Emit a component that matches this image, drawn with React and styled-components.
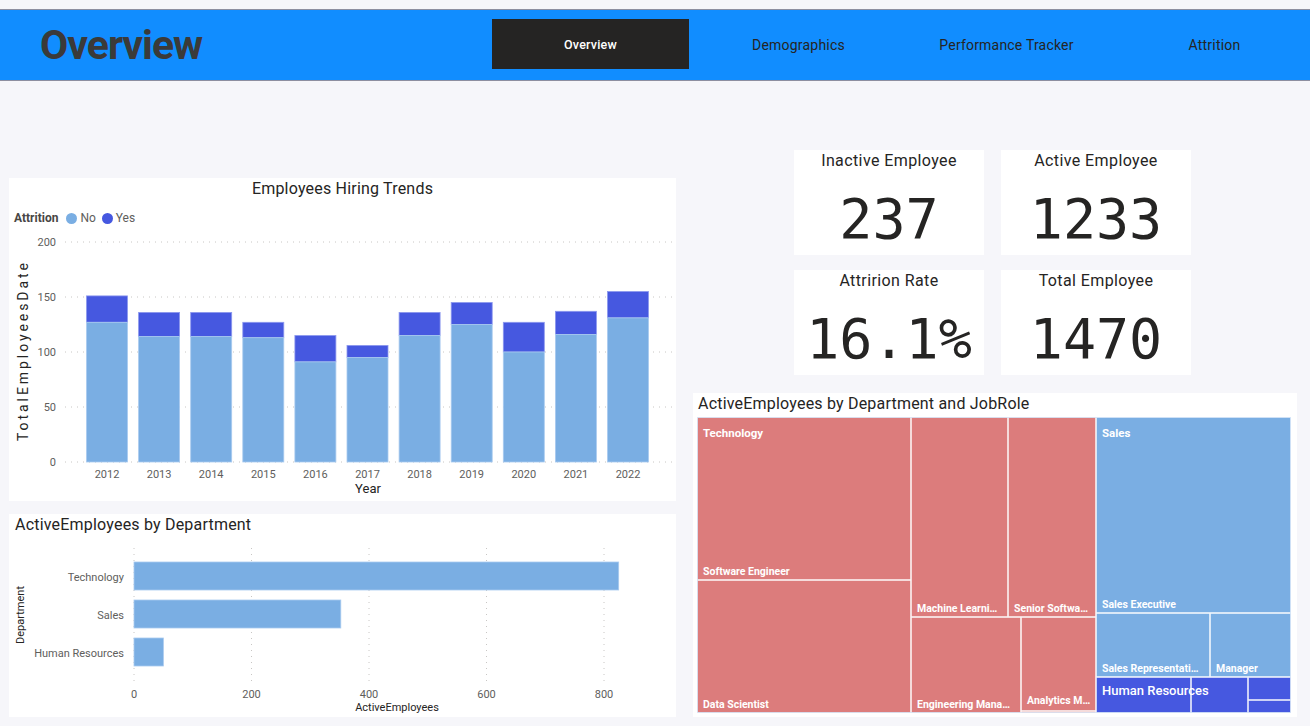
import React from "react";
import styled, { createGlobalStyle } from "styled-components";

const GlobalStyle = createGlobalStyle`
  html, body { margin: 0; padding: 0; background: #F6F6FA; }
  body { font-family: Roboto, "Noto Sans", sans-serif; color: #252423; }
`;

const Page = styled.div`
  width: 1310px;
  height: 726px;
  overflow: hidden;
  padding-top: 9px;
  box-sizing: border-box;
`;

const Header = styled.header`
  height: 72px;
  box-sizing: border-box;
  background: #118dff;
  border-top: 1px solid #8d8fa0;
  border-bottom: 1px solid #8d8fa0;
  display: flex;
  align-items: center;
`;

const Title = styled.h1`
  margin: 0;
  width: 492px;
  flex: none;
  padding-left: 40px;
  box-sizing: border-box;
  font-size: 41px;
  font-weight: 700;
  color: #3b3a39;
  letter-spacing: -1px;
`;

const Tabs = styled.nav`
  display: flex;
  gap: 11px;
  flex: none;
  margin-top: -2px;
`;

const Tab = styled.div`
  width: 197px;
  height: 50px;
  flex: none;
  display: flex;
  align-items: center;
  justify-content: center;
  background: ${(p) => (p.$active ? "#252423" : "transparent")};
  color: ${(p) => (p.$active ? "#ffffff" : "#252423")};
  font-size: ${(p) => (p.$active ? "12.5px" : "14px")};
  font-weight: ${(p) => (p.$active ? 500 : 400)};
  letter-spacing: 0.2px;
  padding-top: 1px;
  box-sizing: border-box;
`;

const Main = styled.main`
  display: flex;
  padding-left: 9px;
`;

const LeftCol = styled.div`
  width: 667px;
  flex: none;
  display: flex;
  flex-direction: column;
  gap: 13px;
  padding-top: 97px;
`;

const RightCol = styled.div`
  width: 604px;
  flex: none;
  margin-left: 17px;
  display: flex;
  flex-direction: column;
  padding-top: 69px;
`;

const Card = styled.section`
  background: #ffffff;
  height: ${(p) => p.$h}px;
  display: flex;
  flex-direction: column;
  overflow: hidden;
`;

const CardTitle = styled.h2`
  margin: 0;
  font-size: 16px;
  font-weight: 400;
  line-height: 22px;
  height: 20px;
  color: #252423;
  text-align: ${(p) => (p.$center ? "center" : "left")};
  padding-left: ${(p) => p.$pl || 0}px;
  letter-spacing: 0.2px;
  overflow: visible;
`;

const Legend = styled.div`
  display: flex;
  align-items: center;
  margin-top: 12px;
  padding-left: 5px;
  height: 16px;
  font-size: 12px;
  color: #605e5c;
`;

const LegendTitle = styled.span`
  font-weight: 700;
  color: #484644;
  margin-right: 8px;
`;

const LegendItem = styled.span`
  display: flex;
  align-items: center;
  gap: 3px;
  margin-right: 6px;
`;

const Dot = styled.span`
  width: 11px;
  height: 11px;
  border-radius: 50%;
  background: ${(p) => p.$c};
`;

const ChartSvg = styled.svg`
  display: block;
  flex: none;
  margin-top: ${(p) => p.$mt || 0}px;
  margin-left: ${(p) => p.$ml || 0}px;
`;

const AxisText = styled.text`
  font-family: Roboto, "Noto Sans", sans-serif;
  font-size: 11px;
  fill: #605e5c;
`;

const AxisTitle = styled.text`
  font-family: Roboto, "Noto Sans", sans-serif;
  font-size: ${(p) => p.$fs || 13}px;
  fill: #252423;
`;

const KpiGrid = styled.div`
  display: grid;
  grid-template-columns: 190px 190px;
  grid-auto-rows: 105px;
  column-gap: 17px;
  row-gap: 15px;
  padding-left: 101px;
`;

const Kpi = styled.div`
  background: #ffffff;
  display: flex;
  flex-direction: column;
  align-items: center;
`;

const KpiLabel = styled.div`
  font-size: 16px;
  line-height: 22px;
  height: 20px;
  color: #252423;
  letter-spacing: 0.4px;
`;

const KpiValue = styled.div`
  font-family: "DejaVu Sans Mono", "Liberation Mono", monospace;
  font-size: 55px;
  line-height: 55px;
  margin-top: 22px;
  color: #252423;
`;

const TreeCard = styled(Card)`
  margin-top: 18px;
`;

const TreeLabel = styled.text`
  font-family: Roboto, "Noto Sans", sans-serif;
  font-size: ${(p) => p.$fs || 10.5}px;
  font-weight: ${(p) => p.$w || 700};
  fill: #ffffff;
`;

const LIGHT = "#7aaee3";
const DARK = "#4658e0";
const RED = "#dc7c7c";

const years = [
  [2012, 127, 151],
  [2013, 114, 136],
  [2014, 114, 136],
  [2015, 113, 127],
  [2016, 91, 115],
  [2017, 95, 106],
  [2018, 115, 136],
  [2019, 125, 145],
  [2020, 100, 127],
  [2021, 116, 137],
  [2022, 131, 155],
];

function HiringChart() {
  const y0 = 232;
  const k = 1.1;
  return (
    <ChartSvg width="667" height="271" $mt={4}>
      {[0, 50, 100, 150, 200].map((v) => (
        <g key={v}>
          <line x1="56" x2="666" y1={y0 - v * k} y2={y0 - v * k} stroke="#c8c6c4" strokeWidth="1" strokeDasharray="1 5" />
          <AxisText x="47" y={y0 - v * k + 4} textAnchor="end">{v}</AxisText>
        </g>
      ))}
      {years.map(([yr, no, tot], i) => {
        const cx = 98 + 52.1 * i;
        const x = cx - 20.5;
        return (
          <g key={yr}>
            <rect x={x} y={y0 - tot * k} width="41" height={(tot - no) * k} fill={DARK} stroke="#8c98ee" strokeWidth="0.8" />
            <rect x={x} y={y0 - no * k} width="41" height={no * k} fill={LIGHT} stroke="#a9caef" strokeWidth="0.8" />
            <AxisText x={cx} y="248" textAnchor="middle">{yr}</AxisText>
          </g>
        );
      })}
      <AxisTitle x="359" y="263" textAnchor="middle">Year</AxisTitle>
      <AxisTitle x="14" y="127" textAnchor="middle" transform="rotate(-90 14 122)" $fs={14} textLength="178">
        TotalEmployeesDate
      </AxisTitle>
    </ChartSvg>
  );
}

const depts = [
  ["Technology", 825, 28, 47],
  ["Sales", 352, 66, 85],
  ["Human Resources", 50, 104, 123],
];

function DeptChart() {
  const x0 = 125;
  const k = 0.5875;
  return (
    <ChartSvg width="667" height="183">
      {[0, 200, 400, 600, 800].map((v) => (
        <g key={v}>
          <line x1={x0 + v * k} x2={x0 + v * k} y1="14" y2="148" stroke="#c8c6c4" strokeWidth="1" strokeDasharray="1 5" />
          <AxisText x={x0 + v * k} y="164" textAnchor="middle">{v}</AxisText>
        </g>
      ))}
      {depts.map(([name, v, y, ly]) => (
        <g key={name}>
          <rect x={x0} y={y} width={v * k} height="28" fill={LIGHT} stroke="#a9caef" strokeWidth="0.8" />
          <AxisText x="115" y={ly} textAnchor="end">{name}</AxisText>
        </g>
      ))}
      <AxisTitle x="388" y="177" textAnchor="middle" $fs={11}>ActiveEmployees</AxisTitle>
      <AxisTitle x="11" y="85" textAnchor="middle" transform="rotate(-90 11 81)" $fs={11}>Department</AxisTitle>
    </ChartSvg>
  );
}

const cells = [
  { x: 0, y: 0, w: 214, h: 163, c: RED, label: "Software Engineer" },
  { x: 0, y: 163, w: 214, h: 133, c: RED, label: "Data Scientist" },
  { x: 214, y: 0, w: 97, h: 200, c: RED, label: "Machine Learni…" },
  { x: 311, y: 0, w: 88, h: 200, c: RED, label: "Senior Softwa…" },
  { x: 214, y: 200, w: 110, h: 96, c: RED, label: "Engineering Mana…" },
  { x: 324, y: 200, w: 75, h: 94, c: RED, label: "Analytics M…" },
  { x: 324, y: 294, w: 75, h: 2, c: RED },
  { x: 399, y: 0, w: 195, h: 196, c: LIGHT, label: "Sales Executive" },
  { x: 399, y: 196, w: 114, h: 64, c: LIGHT, label: "Sales Representati…" },
  { x: 513, y: 196, w: 81, h: 64, c: LIGHT, label: "Manager" },
  { x: 399, y: 260, w: 95, h: 36, c: DARK },
  { x: 494, y: 260, w: 57, h: 36, c: DARK },
  { x: 551, y: 260, w: 43, h: 23, c: DARK },
  { x: 551, y: 283, w: 43, h: 13, c: DARK },
];

function Treemap() {
  return (
    <ChartSvg width="594" height="296" $mt={4} $ml={4}>
      {cells.map((c, i) => (
        <rect
          key={i}
          x={c.x + 0.5}
          y={c.y + 0.5}
          width={c.w - 1}
          height={c.h - 1}
          fill={c.c}
          stroke="rgba(255,255,255,0.45)"
          strokeWidth="1"
        />
      ))}
      {cells
        .filter((c) => c.label)
        .map((c) => (
          <TreeLabel key={c.label} x={c.x + 6} y={c.y + c.h - (c.label === "Analytics M…" ? 7 : 5)}>
            {c.label}
          </TreeLabel>
        ))}
      <TreeLabel x="6" y="20" $fs={11.5}>Technology</TreeLabel>
      <TreeLabel x="405" y="20" $fs={11.5}>Sales</TreeLabel>
      <TreeLabel x="405" y="278" $fs={13} $w={500}>Human Resources</TreeLabel>
      <rect x="0.5" y="0.5" width="593" height="295" fill="none" stroke="rgba(200,220,245,0.6)" strokeWidth="1" />
    </ChartSvg>
  );
}

const kpis = [
  ["Inactive Employee", "237"],
  ["Active Employee", "1233"],
  ["Attririon Rate", "16.1%"],
  ["Total Employee", "1470"],
];

export default function App() {
  return (
    <Page>
      <GlobalStyle />
      <Header>
        <Title>Overview</Title>
        <Tabs>
          <Tab $active>Overview</Tab>
          <Tab>Demographics</Tab>
          <Tab>Performance Tracker</Tab>
          <Tab>Attrition</Tab>
        </Tabs>
      </Header>
      <Main>
        <LeftCol>
          <Card $h={323}>
            <CardTitle $center>Employees Hiring Trends</CardTitle>
            <Legend>
              <LegendTitle>Attrition</LegendTitle>
              <LegendItem><Dot $c={LIGHT} />No</LegendItem>
              <LegendItem><Dot $c={DARK} />Yes</LegendItem>
            </Legend>
            <HiringChart />
          </Card>
          <Card $h={203}>
            <CardTitle $pl={6}>ActiveEmployees by Department</CardTitle>
            <DeptChart />
          </Card>
        </LeftCol>
        <RightCol>
          <KpiGrid>
            {kpis.map(([l, v]) => (
              <Kpi key={l}>
                <KpiLabel>{l}</KpiLabel>
                <KpiValue>{v}</KpiValue>
              </Kpi>
            ))}
          </KpiGrid>
          <TreeCard $h={324}>
            <CardTitle $pl={5}>ActiveEmployees by Department and JobRole</CardTitle>
            <Treemap />
          </TreeCard>
        </RightCol>
      </Main>
    </Page>
  );
}
